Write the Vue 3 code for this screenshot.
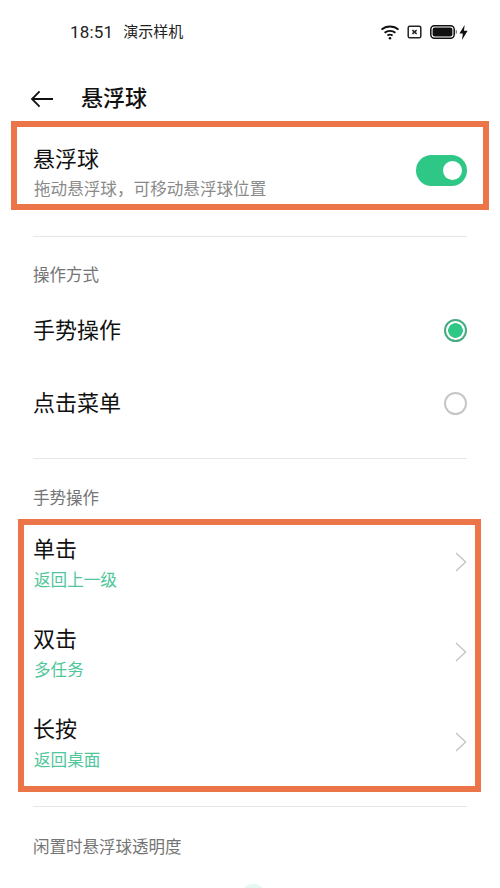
<script setup>
const radios = [
  { label: '手势操作', on: true },
  { label: '点击菜单', on: false },
]
const gestures = [
  { title: '单击', value: '返回上一级' },
  { title: '双击', value: '多任务' },
  { title: '长按', value: '返回桌面' },
]
</script>

<template>
  <div class="page">
    <div class="status">
      <span class="time">18:51</span>
      <span class="device">演示样机</span>
      <span class="status-icons">
        <svg class="wifi" viewBox="0 0 20 16" width="20" height="16" fill="none" stroke="#111" stroke-width="1.9">
          <path d="M1.5 5.6C6.2 1.4 13.8 1.4 18.5 5.6" />
          <path d="M4.6 8.8C7.6 6.2 12.4 6.2 15.4 8.8" />
          <path d="M7.4 11.6C8.9 10.5 11.1 10.5 12.6 11.6" />
          <circle cx="10" cy="14.2" r="1.3" fill="#111" stroke="none" />
        </svg>
        <svg class="sim" viewBox="0 0 15 14" width="15" height="14" fill="none" stroke="#222">
          <rect x="1.2" y="1.2" width="12.6" height="11.6" rx="1.6" stroke-width="1.5" />
          <path d="M5.4 5.1L9.6 8.9M9.6 5.1L5.4 8.9" stroke-width="1.5" />
        </svg>
        <svg class="battery" viewBox="0 0 28 14" width="28" height="14">
          <rect x="0.8" y="0.8" width="23.4" height="12.4" rx="3.6" fill="none" stroke="#111" stroke-width="1.5" />
          <rect x="2.6" y="2.6" width="19.8" height="8.8" rx="2.2" fill="#111" />
          <path d="M25.8 4.8C27 5.2 27 8.8 25.8 9.2Z" fill="#333" />
        </svg>
        <svg class="bolt" viewBox="0 0 9 15" width="9" height="15">
          <path d="M5.6 0L0.4 8.4H3.8L3 15L8.6 5.8H5Z" fill="#111" />
        </svg>
      </span>
    </div>

    <header class="header">
      <svg class="back" viewBox="0 0 24 18" width="24" height="18" fill="none" stroke="#111" stroke-width="1.8">
        <path d="M23 9H2M9.6 1.4L2 9L9.6 16.6" />
      </svg>
      <h1 class="heading">悬浮球</h1>
    </header>

    <section class="box box-top">
      <div class="text">
        <div class="title">悬浮球</div>
        <div class="sub">拖动悬浮球，可移动悬浮球位置</div>
      </div>
      <span class="toggle"><span class="knob"></span></span>
    </section>

    <div class="rule rule-first"></div>
    <div class="label label-first">操作方式</div>
    <div class="radios">
      <div v-for="r in radios" :key="r.label" class="radio-row">
        <span class="title">{{ r.label }}</span>
        <span class="radio" :class="{ on: r.on }"></span>
      </div>
    </div>

    <div class="rule rule-second"></div>
    <div class="label">手势操作</div>

    <section class="box box-list">
      <div v-for="g in gestures" :key="g.title" class="gesture">
        <div class="text">
          <div class="title">{{ g.title }}</div>
          <div class="value">{{ g.value }}</div>
        </div>
        <svg class="chev" viewBox="0 0 12 20" width="12" height="20" fill="none" stroke="#c4c4c4" stroke-width="1.4">
          <path d="M1 1L10.6 10L1 19" />
        </svg>
      </div>
    </section>

    <div class="rule rule-third"></div>
    <div class="label label-last">闲置时悬浮球透明度</div>
    <div class="slider"><span class="thumb"></span></div>
  </div>
</template>

<style>
html, body { margin: 0; background: #fff; }
</style>

<style scoped>
.page {
  width: 500px;
  height: 888px;
  overflow: hidden;
  background: #fff;
  color: #111;
  font-family: "Noto Sans CJK SC", "Noto Sans", sans-serif;
}
.status {
  height: 64px;
  display: flex;
  align-items: center;
  padding: 0 32px 0 70px;
  box-sizing: border-box;
}
.time { font-family: Roboto, sans-serif; font-size: 17px; color: #222; letter-spacing: 0.2px; }
.device { font-size: 15px; color: #222; margin-left: 10px; margin-bottom: 4px; }
.status-icons { margin-left: auto; display: flex; align-items: center; }
.sim { margin-left: 7px; }
.battery { margin-left: 8px; }
.bolt { margin-left: 1px; }
.header {
  height: 57px;
  padding-top: 12px;
  box-sizing: border-box;
  display: flex;
  align-items: center;
  padding-left: 30px;
}
.heading { margin: 0 0 6px 27px; font-size: 22px; font-weight: 500; line-height: 30px; }
.box { border: 6px solid #ec7449; box-sizing: border-box; }
.box-top {
  margin: 0 11px;
  height: 89px;
  display: flex;
  align-items: flex-start;
  justify-content: space-between;
  padding: 15px 16px 0;
}
.title { font-size: 22px; line-height: 30px; color: #111; }
.sub { font-size: 16.6px; line-height: 24px; color: #8a8a8a; margin: 4px 0 0 1px; }
.toggle {
  width: 51px;
  height: 31px;
  border-radius: 16px;
  background: #2fc786;
  display: flex;
  align-items: center;
  justify-content: flex-end;
  padding-right: 5px;
  box-sizing: border-box;
  margin-top: 13px;
}
.knob { width: 19px; height: 19px; border-radius: 50%; background: #fff; }
.rule { height: 1px; background: #e6e6e6; margin-left: 33px; margin-right: 33px; }
.rule-first { margin-top: 26px; }
.rule-second { margin-top: 18px; }
.rule-third { margin-top: 14px; }
.label { margin: 26px 33px 0; font-size: 16.5px; line-height: 24px; color: #747474; }
.label-first { margin-top: 25px; }
.label-last { margin-top: 27px; }
.radios { margin-top: 8px; }
.radio-row {
  height: 73px;
  display: flex;
  align-items: center;
  justify-content: space-between;
  padding: 0 33px;
}
.radio-row .title { margin-bottom: 6px; }
.radio {
  width: 23px;
  height: 23px;
  border-radius: 50%;
  border: 2px solid #c6c6c6;
  box-sizing: border-box;
}
.radio.on {
  border-color: #45ac82;
  background: radial-gradient(circle, #2fc786 0 7px, #fff 7.6px);
}
.box-list {
  margin: 10px 19px 0 18px;
  height: 273px;
  padding-top: 7px;
  display: flex;
  flex-direction: column;
  gap: 31px;
}
.gesture {
  height: 59px;
  display: flex;
  align-items: center;
  justify-content: space-between;
  padding: 0 8px 0 9px;
}
.value { font-size: 16.6px; line-height: 24px; color: #4fc79a; margin: 5px 0 0 1px; }
.slider { position: relative; height: 30px; }
.thumb {
  position: absolute;
  left: 240px;
  top: 26px;
  width: 26px;
  height: 26px;
  border-radius: 50%;
  background: #e6f8f2;
}
</style>
